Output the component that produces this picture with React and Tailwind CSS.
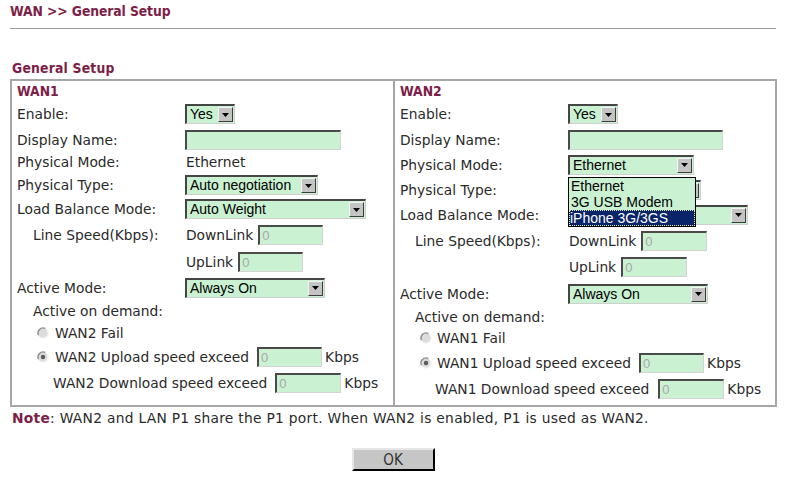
import React from "react";

const MAROON = "text-[#7d1e47]";

function Arrow() {
  return (
    <div className="ml-auto mr-[1px] my-[1px] w-[15px] h-[15px] shrink-0 bg-[#c4c4c4] border border-t-[#f4f4f4] border-l-[#f4f4f4] border-b-[#3c3c3c] border-r-[#3c3c3c] flex items-center justify-center">
      <svg width="7" height="4" viewBox="0 0 7 4">
        <path d="M0 0H7L3.5 4Z" fill="#000" />
      </svg>
    </div>
  );
}

function Sel({ w, value, children }) {
  return (
    <div
      className={`relative flex items-stretch h-[20px] ${w} bg-[#c9f1d2] border-t-2 border-l-2 border-b border-r border-t-[#454545] border-l-[#454545] border-b-[#cfcfcf] border-r-[#cfcfcf]`}
    >
      <div className="flex-1 pl-[3px] text-[14px] leading-[17px] text-black font-['Liberation_Sans',Arial,sans-serif] whitespace-nowrap overflow-hidden">
        {value}
      </div>
      <Arrow />
      {children}
    </div>
  );
}

function Inp({ w, value }) {
  return (
    <div
      className={`h-[20px] ${w} bg-[#c9f1d2] border-t-2 border-l-2 border-b border-r border-t-[#4a4a4a] border-l-[#4a4a4a] border-b-[#d4d4d4] border-r-[#d4d4d4] pl-[2px] text-[13px] leading-[17px] text-[#a8a8a8] font-['Liberation_Sans',Arial,sans-serif]`}
    >
      {value}
    </div>
  );
}

function Radio({ checked }) {
  return (
    <svg width="12" height="12" viewBox="0 0 12 12" className="shrink-0">
      <circle cx="6" cy="6" r="5" fill="#dcdcdc" />
      <path d="M1.5 8.2A5 5 0 0 1 8.2 1.5" fill="none" stroke="#8c8c8c" strokeWidth="1.4" />
      <path d="M10.5 3.8A5 5 0 0 1 3.8 10.5" fill="none" stroke="#f2f2f2" strokeWidth="1.2" />
      {checked && <circle cx="6" cy="6" r="2.2" fill="#5a5a5a" />}
    </svg>
  );
}

function Row({ h, label, children, lp = "" }) {
  return (
    <div className={`flex items-center ${h}`}>
      <div className={`w-[168px] shrink-0 whitespace-nowrap ${lp}`}>{label}</div>
      <div className="flex items-center whitespace-nowrap">{children}</div>
    </div>
  );
}

function Left() {
  return (
    <div className="w-[381px] shrink-0 pl-[5px] flex flex-col">
      <div className={`h-[20px] flex items-center font-bold ${MAROON} font-['DejaVu_Sans_Condensed','DejaVu_Sans',sans-serif]`}>
        WAN1
      </div>
      <Row h="h-[26px]" label="Enable:">
        <Sel w="w-[50px]" value="Yes" />
      </Row>
      <Row h="h-[25px]" label="Display Name:">
        <Inp w="w-[156px]" value="" />
      </Row>
      <Row h="h-[20px]" label="Physical Mode:">
        <span className="pl-[1px]">Ethernet</span>
      </Row>
      <Row h="h-[26px]" label="Physical Type:">
        <Sel w="w-[133px]" value="Auto negotiation" />
      </Row>
      <Row h="h-[22px]" label="Load Balance Mode:">
        <Sel w="w-[181px]" value="Auto Weight" />
      </Row>
      <Row h="h-[30px]" label="Line Speed(Kbps):" lp="pl-[16px]">
        <span className="pl-[1px]">DownLink</span>
        <span className="ml-[5px]">
          <Inp w="w-[65px]" value="0" />
        </span>
      </Row>
      <Row h="h-[24px]" label="">
        <span className="pl-[1px]">UpLink</span>
        <span className="ml-[5px]">
          <Inp w="w-[65px]" value="0" />
        </span>
      </Row>
      <Row h="h-[27px]" label="Active Mode:">
        <Sel w="w-[140px]" value="Always On" />
      </Row>
      <div className="h-[19px] flex items-center pl-[16px]">Active on demand:</div>
      <div className="h-[26px] flex items-center pl-[20px] whitespace-nowrap">
        <Radio />
        <span className="ml-[6px]">WAN2 Fail</span>
      </div>
      <div className="h-[22px] flex items-center pl-[20px] whitespace-nowrap">
        <Radio checked />
        <span className="ml-[6px]">WAN2 Upload speed exceed</span>
        <span className="ml-[8px]">
          <Inp w="w-[65px]" value="0" />
        </span>
        <span className="ml-[3px]">Kbps</span>
      </div>
      <div className="h-[30px] flex items-center pl-[36px] whitespace-nowrap">
        <span>WAN2 Download speed exceed</span>
        <span className="ml-[8px]">
          <Inp w="w-[66px]" value="0" />
        </span>
        <span className="ml-[3px]">Kbps</span>
      </div>
    </div>
  );
}

function Right() {
  return (
    <div className="flex-1 pl-[5px] flex flex-col border-l-2 border-[#a6a6a6]">
      <div className={`h-[20px] flex items-center font-bold ${MAROON} font-['DejaVu_Sans_Condensed','DejaVu_Sans',sans-serif]`}>
        WAN2
      </div>
      <Row h="h-[26px]" label="Enable:">
        <Sel w="w-[50px]" value="Yes" />
      </Row>
      <Row h="h-[25px]" label="Display Name:">
        <Inp w="w-[155px]" value="" />
      </Row>
      <Row h="h-[25px]" label="Physical Mode:">
        <div className="relative z-10">
          <Sel w="w-[126px]" value="Ethernet">
            <div className="absolute left-[-2px] top-[20px] w-[128px] border border-black bg-[#c9f1d2] text-[14px] leading-[16px] text-black font-['Liberation_Sans',Arial,sans-serif]">
              <div className="pl-[2px]">Ethernet</div>
              <div className="pl-[2px]">3G USB Modem</div>
              <div className="pl-[1px] bg-[#0a246a] text-white outline-1 outline-dotted outline-[#e8e8a0] -outline-offset-1">
                iPhone 3G/3GS
              </div>
            </div>
          </Sel>
        </div>
      </Row>
      <Row h="h-[25px]" label="Physical Type:">
        <Sel w="w-[133px]" value="Auto negotiation" />
      </Row>
      <Row h="h-[25px]" label="Load Balance Mode:">
        <Sel w="w-[180px]" value="Auto Weight" />
      </Row>
      <Row h="h-[28px]" label="Line Speed(Kbps):" lp="pl-[15px]">
        <span className="pl-[1px]">DownLink</span>
        <span className="ml-[5px]">
          <Inp w="w-[66px]" value="0" />
        </span>
      </Row>
      <Row h="h-[24px]" label="">
        <span className="pl-[1px]">UpLink</span>
        <span className="ml-[5px]">
          <Inp w="w-[66px]" value="0" />
        </span>
      </Row>
      <Row h="h-[29px]" label="Active Mode:">
        <Sel w="w-[140px]" value="Always On" />
      </Row>
      <div className="h-[17px] flex items-center pl-[15px]">Active on demand:</div>
      <div className="h-[26px] flex items-center pl-[20px] whitespace-nowrap">
        <Radio />
        <span className="ml-[5px]">WAN1 Fail</span>
      </div>
      <div className="h-[23px] flex items-center pl-[20px] whitespace-nowrap">
        <Radio checked />
        <span className="ml-[5px]">WAN1 Upload speed exceed</span>
        <span className="ml-[8px]">
          <Inp w="w-[65px]" value="0" />
        </span>
        <span className="ml-[3px]">Kbps</span>
      </div>
      <div className="h-[29px] flex items-center pl-[35px] whitespace-nowrap">
        <span>WAN1 Download speed exceed</span>
        <span className="ml-[9px]">
          <Inp w="w-[66px]" value="0" />
        </span>
        <span className="ml-[3px]">Kbps</span>
      </div>
    </div>
  );
}

export default function App() {
  return (
    <div className="w-[786px] h-[482px] bg-white overflow-hidden text-[#2a2a2a] text-[13.8px] leading-[16px] font-['DejaVu_Sans',Verdana,sans-serif]">
      <div className={`h-[22px] pl-[10px] flex items-center font-bold ${MAROON} font-['DejaVu_Sans_Condensed','DejaVu_Sans',sans-serif] tracking-[-0.1px]`}>
        WAN &gt;&gt; General Setup
      </div>
      <div className="mt-[6px] mx-[10px] border-t border-[#9a9a9a]" />
      <div className={`mt-[30px] h-[18px] pl-[12px] flex items-center font-bold ${MAROON} font-['DejaVu_Sans_Condensed','DejaVu_Sans',sans-serif] tracking-[0.2px]`}>
        General Setup
      </div>
      <div className="mt-[2px] ml-[10px] w-[767px] h-[328px] border-2 border-[#a6a6a6] flex">
        <Left />
        <Right />
      </div>
      <div className="mt-[3px] h-[16px] pl-[12px] whitespace-nowrap tracking-[0.28px]">
        <span className={`font-bold ${MAROON}`}>Note</span>
        <span>: WAN2 and LAN P1 share the P1 port. When WAN2 is enabled, P1 is used as WAN2.</span>
      </div>
      <div className="mt-[22px] flex justify-center">
        <button className="w-[83px] h-[23px] bg-[#c6c6c6] border-2 border-t-[#e6e6e6] border-l-[#e6e6e6] border-b-black border-r-black text-[15px] text-[#333] font-['DejaVu_Sans_Condensed','Liberation_Sans_Narrow','DejaVu_Sans',sans-serif] leading-[18px]">
          OK
        </button>
      </div>
    </div>
  );
}
